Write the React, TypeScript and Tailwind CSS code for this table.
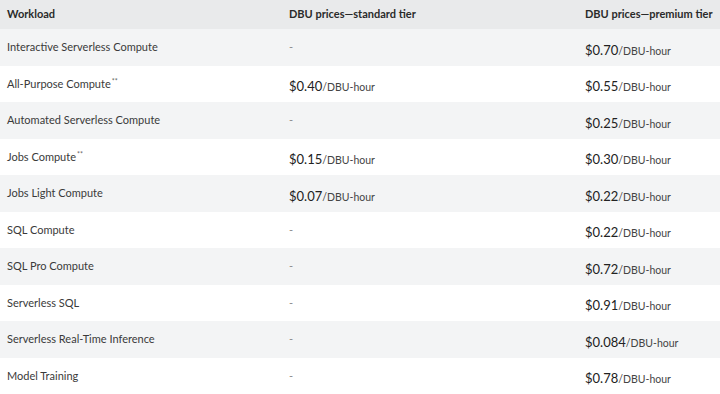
import React from 'react';

type Row = {
  name: string;
  mark?: boolean;
  standard?: string;
  premium: string;
};

const ROWS: Row[] = [
  { name: 'Interactive Serverless Compute', premium: '$0.70' },
  { name: 'All-Purpose Compute', mark: true, standard: '$0.40', premium: '$0.55' },
  { name: 'Automated Serverless Compute', premium: '$0.25' },
  { name: 'Jobs Compute', mark: true, standard: '$0.15', premium: '$0.30' },
  { name: 'Jobs Light Compute', standard: '$0.07', premium: '$0.22' },
  { name: 'SQL Compute', premium: '$0.22' },
  { name: 'SQL Pro Compute', premium: '$0.72' },
  { name: 'Serverless SQL', premium: '$0.91' },
  { name: 'Serverless Real-Time Inference', premium: '$0.084' },
  { name: 'Model Training', premium: '$0.78' },
];

function Price({ value }: { value?: string }) {
  if (!value) return <span className="text-[11px] text-[#8a8a8a]">-</span>;
  return (
    <span className="text-[#222] whitespace-nowrap pt-[3px]">
      <span className="text-[13px]">{value}</span>
      <span className="text-[10.5px] text-[#444]">/DBU-hour</span>
    </span>
  );
}

export default function App() {
  return (
    <div className="w-[720px] h-[394px] bg-white overflow-hidden font-['Lato',sans-serif]">
      <div className="grid grid-cols-[282px_296px_1fr] h-[29px] items-center bg-[#e9eaeb] text-[11px] font-bold text-[#2a2a2a] whitespace-nowrap">
        <div className="pl-[7px]">Workload</div>
        <div className="pl-[7px]">DBU prices—standard tier</div>
        <div className="pl-[7px]">DBU prices—premium tier</div>
      </div>
      {ROWS.map((row, i) => (
        <div
          key={row.name}
          className={`grid grid-cols-[282px_296px_1fr] h-[36.5px] items-center ${i % 2 === 0 ? 'bg-[#f3f4f5]' : 'bg-white'}`}
        >
          <div className="pl-[7px] text-[11px] text-[#3a3a3a] whitespace-nowrap">
            {row.name}
            {row.mark && <sup className="text-[7px] text-[#666] ml-[1px]">**</sup>}
          </div>
          <div className="pl-[7px] flex">
            <Price value={row.standard} />
          </div>
          <div className="pl-[7px] flex">
            <Price value={row.premium} />
          </div>
        </div>
      ))}
    </div>
  );
}
